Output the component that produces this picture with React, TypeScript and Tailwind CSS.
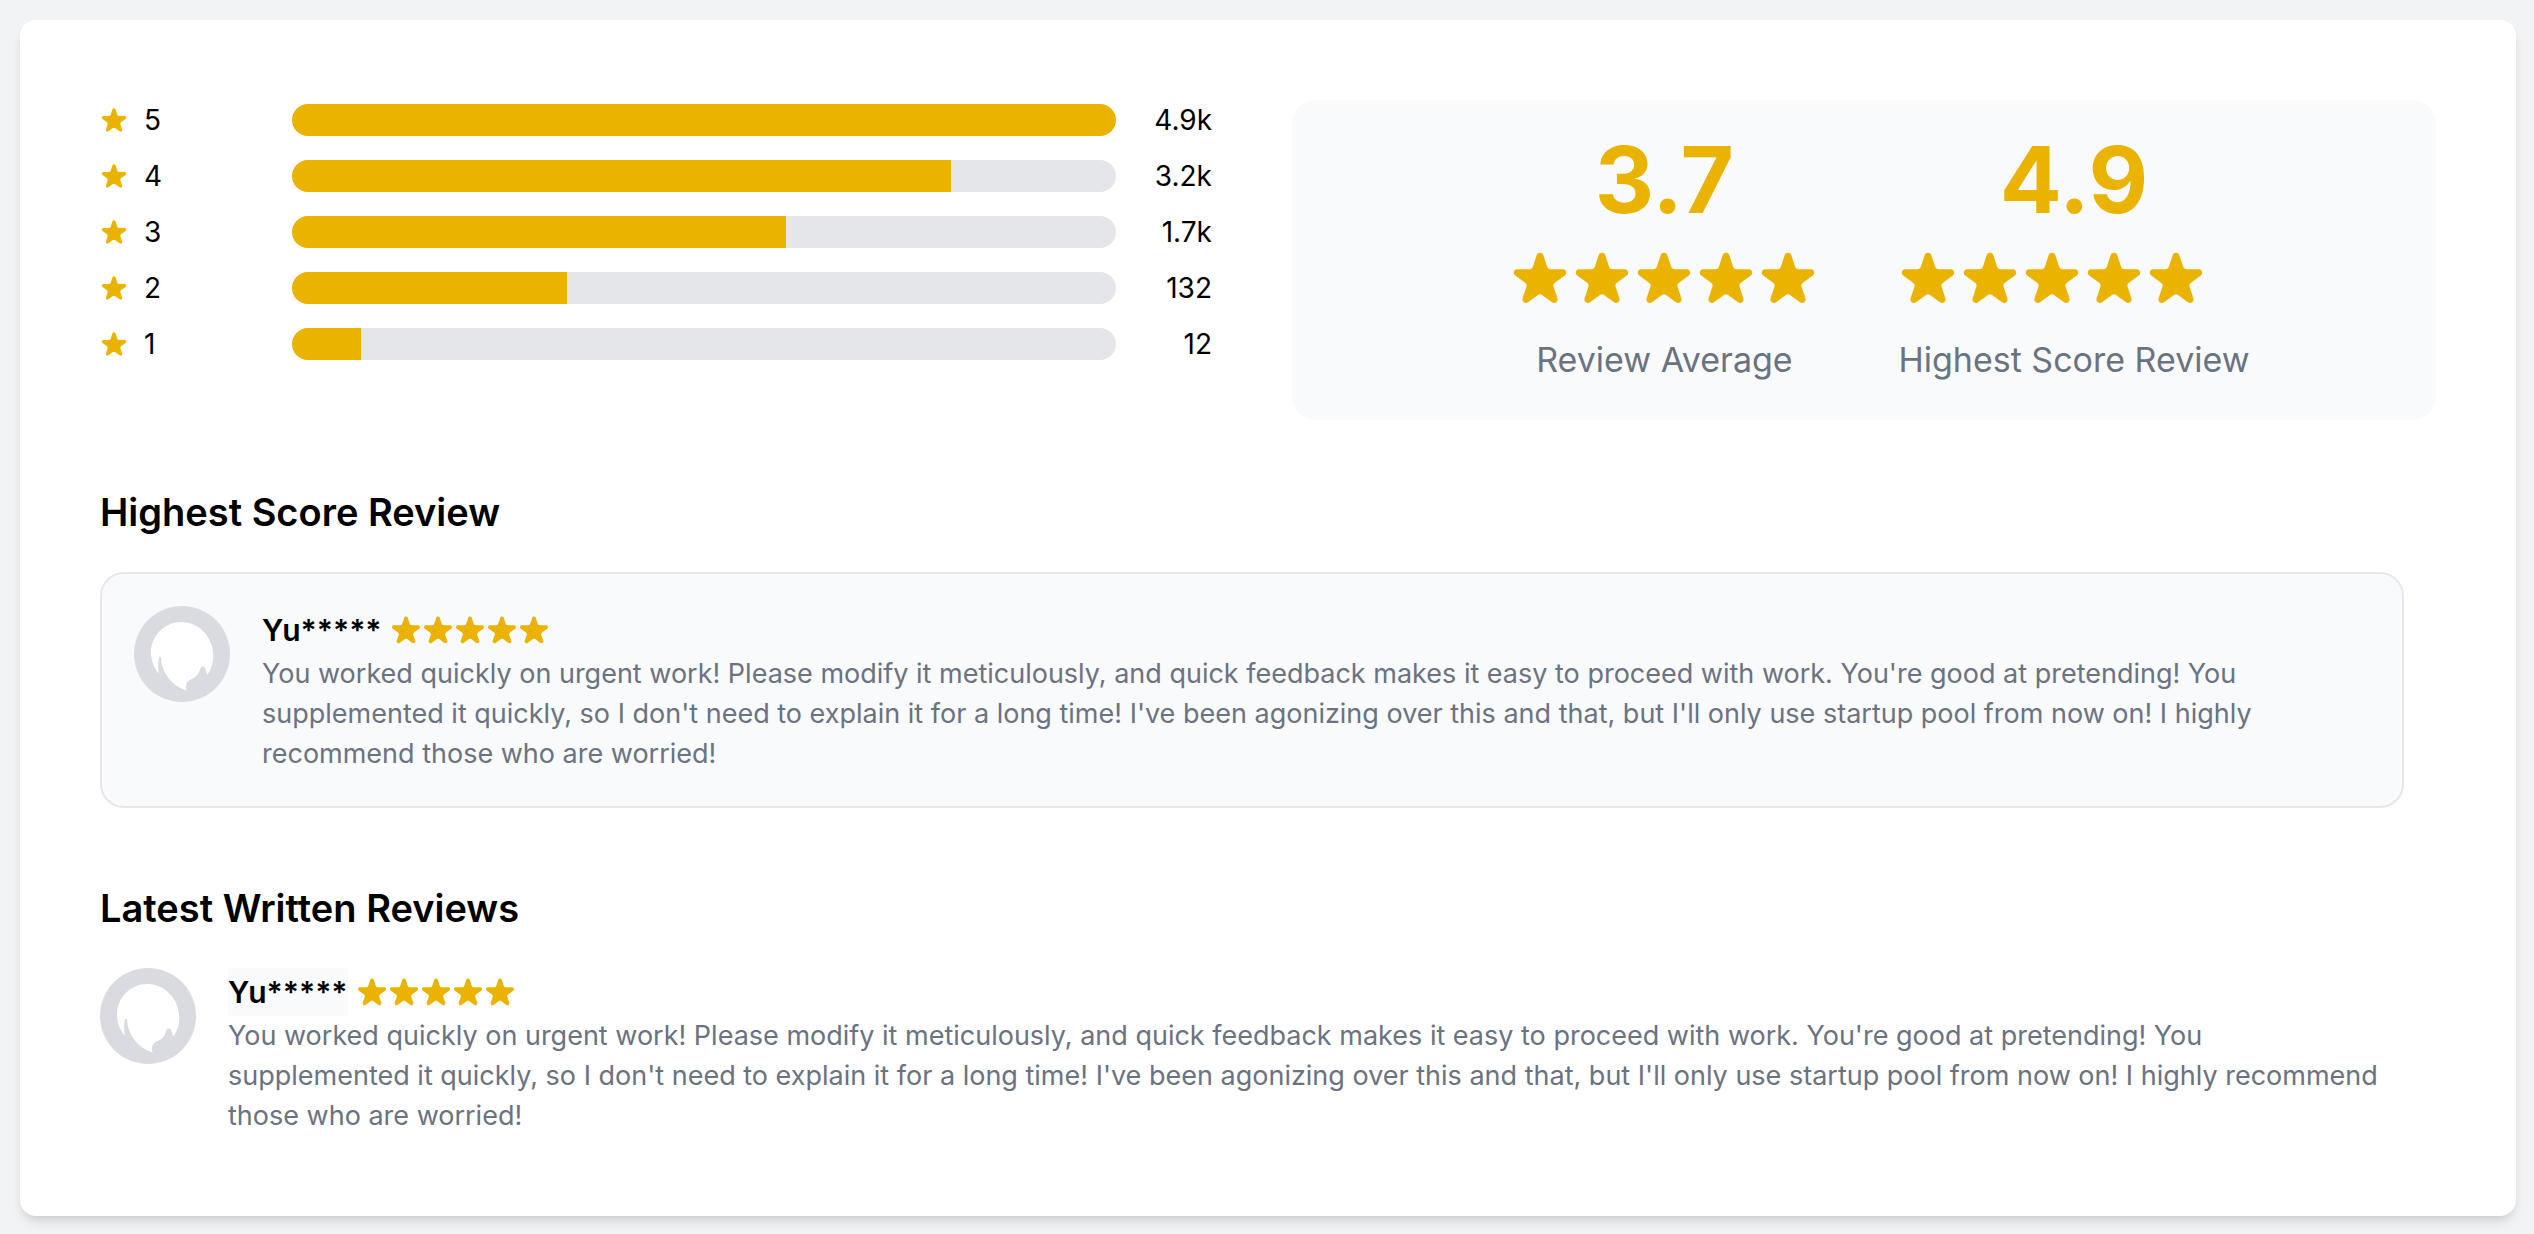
import React from 'react';

interface RatingRow {
  stars: number;
  percent: number;
  count: string;
}

interface Summary {
  score: string;
  label: string;
}

interface Review {
  name: string;
  content: string;
}

const ratingRows: RatingRow[] = [
  { stars: 5, percent: 100, count: '4.9k' },
  { stars: 4, percent: 80, count: '3.2k' },
  { stars: 3, percent: 60, count: '1.7k' },
  { stars: 2, percent: 33.3333, count: '132' },
  { stars: 1, percent: 8.3333, count: '12' },
];

const summaries: Summary[] = [
  { score: '3.7', label: 'Review Average' },
  { score: '4.9', label: 'Highest Score Review' },
];

const review: Review = {
  name: 'Yu*****',
  content:
    "You worked quickly on urgent work! Please modify it meticulously, and quick feedback makes it easy to proceed with work. You're good at pretending! You\nsupplemented it quickly, so I don't need to explain it for a long time! I've been agonizing over this and that, but I'll only use startup pool from now on! I highly recommend those who are worried!",
};

const StarIcon: React.FC<{ className?: string }> = ({ className }) => (
  <svg viewBox="1.5 0.9 17 17" fill="currentColor" aria-hidden="true" className={className}>
    <path d="M9.049 2.927c.3-.921 1.603-.921 1.902 0l1.07 3.292a1 1 0 00.95.69h3.462c.969 0 1.371 1.24.588 1.81l-2.8 2.034a1 1 0 00-.364 1.118l1.07 3.292c.3.921-.755 1.688-1.54 1.118l-2.8-2.034a1 1 0 00-1.175 0l-2.8 2.034c-.784.57-1.838-.197-1.539-1.118l1.07-3.292a1 1 0 00-.364-1.118L2.98 8.72c-.783-.57-.38-1.81.588-1.81h3.461a1 1 0 00.951-.69l1.07-3.292z" />
  </svg>
);

const Avatar: React.FC = () => (
  <svg viewBox="0 0 96 96" aria-hidden="true" className="w-24 h-24 shrink-0">
    <circle cx="48" cy="48" r="48" fill="#dadbe1" />
    <path
      d="M47.500 16C65 16 79.300 31 79.300 50C79.300 57 77.500 63 73.300 68.800C71.500 64 71.500 60.500 68.700 60.500C65.500 60.500 66.500 66 62.500 70C59 73.500 54 73 52.300 78C51.700 80.500 52 82 52.500 84.500C38 80 28 67 27 52C26.500 50.300 25.300 50.300 25 52C23.800 57 24 62 24.800 67.700C20 62 17 54.500 17 46.500C17 29.500 30.500 16 47.500 16Z"
      fill="#fff"
    />
  </svg>
);

const ReviewItem: React.FC<{ review: Review; nameClassName?: string }> = ({
  review,
  nameClassName = '',
}) => (
  <article className="flex items-start gap-8">
    <Avatar />
    <div className="flex-1 min-w-0">
      <div className="flex items-center gap-2">
        <h3 className={`text-[30px] leading-12 font-semibold ${nameClassName}`}>{review.name}</h3>
        <div className="flex text-[#eab300]" role="img" aria-label="5 out of 5 stars">
          {[1, 2, 3, 4, 5].map((n) => (
            <StarIcon key={n} className="w-8 h-8" />
          ))}
        </div>
      </div>
      <p className="text-[27px] leading-10 whitespace-pre-line text-[#6b7280]">{review.content}</p>
    </div>
  </article>
);

export default function App() {
  return (
    <div className="min-h-screen bg-[#f2f3f5] py-[18px] pt-5 pl-5 pr-[18px] font-['Inter','Liberation_Sans',sans-serif] text-black">
      <main className="bg-white rounded-2xl p-20 shadow-[0_8px_12px_-2px_rgba(0,0,0,0.1),0_4px_8px_-4px_rgba(0,0,0,0.1)]">
        {/* Rating breakdown and score summary */}
        <section className="grid grid-cols-2 gap-12">
          <div className="flex flex-col gap-4 pr-8">
            {ratingRows.map((row) => (
              <div key={row.stars} className="flex items-center text-[28px] leading-10">
                <div className="flex w-48 items-center gap-4">
                  <StarIcon className="w-7 h-7 text-[#eab300]" />
                  <span>{row.stars}</span>
                </div>
                <div className="flex-1 h-8 overflow-hidden rounded-full bg-[#e5e6ea]">
                  <div className="h-full bg-[#eab300]" style={{ width: `${row.percent}%` }} />
                </div>
                <span className="w-24 text-right">{row.count}</span>
              </div>
            ))}
          </div>

          <div className="flex items-center justify-center gap-20 rounded-3xl bg-[#f9fafc] p-8 pl-16">
            {summaries.map((item) => (
              <div key={item.label} className="text-center">
                <p className="text-[92px] leading-24 font-bold text-[#eab300]">{item.score}</p>
                <div
                  className="mt-5 mb-6 flex gap-0.5 text-[#eab300]"
                  role="img"
                  aria-label="5 out of 5 stars"
                >
                  {[1, 2, 3, 4, 5].map((n) => (
                    <StarIcon key={n} className="w-15 h-15" />
                  ))}
                </div>
                <p className="text-[34px] leading-14 text-[#6b7280]">{item.label}</p>
              </div>
            ))}
          </div>
        </section>

        {/* Highest score review */}
        <section className="mt-16 pr-8">
          <h2 className="text-[38px] leading-14 font-semibold">Highest Score Review</h2>
          <div className="mt-8 rounded-3xl border-2 border-[#e5e7eb] bg-[#f9fafc] p-8">
            <ReviewItem review={review} />
          </div>
        </section>

        {/* Latest reviews */}
        <section className="mt-18 pr-8">
          <h2 className="text-[38px] leading-14 font-semibold">Latest Written Reviews</h2>
          <div className="mt-8">
            <ReviewItem review={review} nameClassName="bg-[#f9fafc]" />
          </div>
        </section>
      </main>
    </div>
  );
}
